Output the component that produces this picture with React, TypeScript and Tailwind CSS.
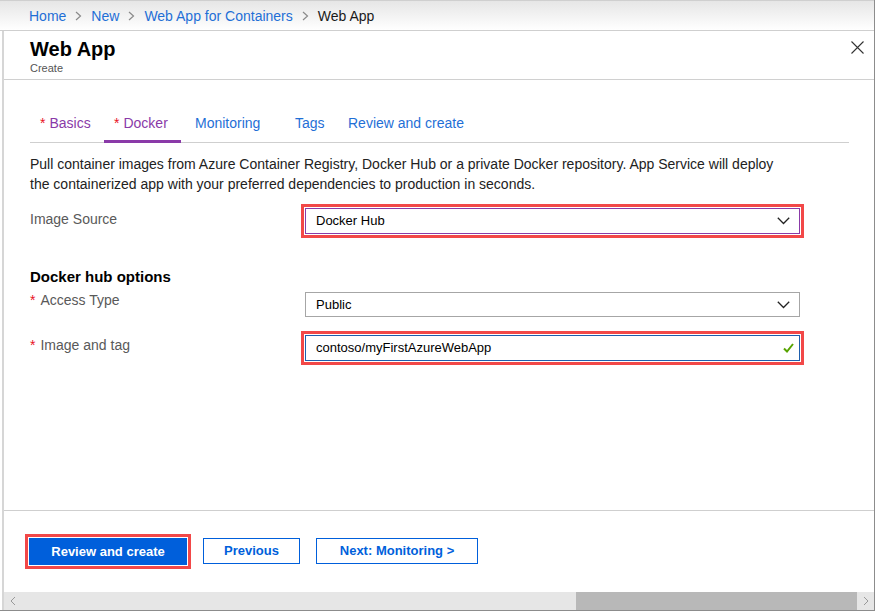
import React from 'react';

const FONT = "font-['Segoe_UI','Liberation_Sans',Arial,sans-serif]";
const INPUT_FONT = "font-['Liberation_Sans',Arial,sans-serif]";

function Chevron() {
    return (
        <svg width="13" height="8" viewBox="0 0 13 8" className="shrink-0">
            <path d="M0.8 0.8 L6.5 6.5 L12.2 0.8" fill="none" stroke="#222" strokeWidth="1.3" />
        </svg>
    );
}

function Crumb({ label, last }: { label: string; last?: boolean }) {
    return (
        <span className="flex items-center">
            <span className={last ? 'text-[#1a1a1a]' : 'text-[#1f6fd6]'}>{label}</span>
            {!last && (
                <svg width="7" height="10" viewBox="0 0 7 10" className="mx-[9px]">
                    <path d="M1 1 L5.5 5 L1 9" fill="none" stroke="#8a8a8a" strokeWidth="1.2" />
                </svg>
            )}
        </span>
    );
}

function Required() {
    return <span className="text-[#e81123] mr-[5px]">*</span>;
}

export default function App() {
    const tabs = [
        { label: 'Basics', req: true, visited: true, w: 'w-[70px]' },
        { label: 'Docker', req: true, visited: true, active: true, w: 'w-[77px]' },
        { label: 'Monitoring', w: 'w-[96px]' },
        { label: 'Tags', w: 'w-[49px]' },
        { label: 'Review and create', w: 'w-[142px]' },
    ];

    return (
        <div className={`w-[876px] h-[612px] bg-white overflow-hidden ${FONT}`}>
            <div className="w-[875px] h-[611px] flex flex-col border-r border-b border-[#8c8c8c]">

                {/* breadcrumb */}
                <div className="h-[31px] shrink-0 flex items-center pl-[29px] pt-[1px] text-[14px] border-t border-b border-[#cfcfcf] bg-gradient-to-b from-[#e6e6e6] to-white">
                    <Crumb label="Home" />
                    <Crumb label="New" />
                    <Crumb label="Web App for Containers" />
                    <Crumb label="Web App" last />
                </div>

                <div className="flex-1 flex flex-col ml-[2px] border-l-2 border-[#d6d6d6] min-h-0">

                    {/* header */}
                    <div className="h-[49px] shrink-0 flex justify-between border-b border-[#d0d0d0] pl-[26px] pr-[10px]">
                        <div className="pt-[5px]">
                            <div className="text-[20px] leading-[26px] font-semibold text-black">Web App</div>
                            <div className="text-[11px] leading-[14px] text-[#555] -mt-[1px]">Create</div>
                        </div>
                        <svg width="13" height="13" viewBox="0 0 13 13" className="mt-[10px]">
                            <path d="M0.5 0.5 L12.5 12.5 M12.5 0.5 L0.5 12.5" stroke="#333" strokeWidth="1.1" />
                        </svg>
                    </div>

                    {/* body */}
                    <div className="flex-1 pl-[26px] pr-[25px] pt-[33px]">
                        <div className="flex gap-[4px] border-b border-[#cfcfcf] text-[14px]">
                            {tabs.map((t) => (
                                <div
                                    key={t.label}
                                    className={`${t.w} px-[10px] pb-[7px] leading-[20px] whitespace-nowrap -mb-px border-b-[3px] ${t.active ? 'border-[#8a3aa8]' : 'border-transparent'} ${t.visited ? 'text-[#8a3aa8]' : 'text-[#1f6fd6]'}`}
                                >
                                    {t.req && <span className="text-[#e81123] mr-[4px]">*</span>}
                                    {t.label}
                                </div>
                            ))}
                        </div>

                        <p className="mt-[11px] text-[14px] leading-[20px] text-[#222]">
                            Pull container images from Azure Container Registry, Docker Hub or a private Docker repository. App Service will deploy
                            <br />
                            the containerized app with your preferred dependencies to production in seconds.
                        </p>

                        <div className="mt-[14px] grid grid-cols-[275px_495px] items-center text-[14px]">
                            <div className="text-[#595959] self-start leading-[20px] pt-[1px]">Image Source</div>
                            <div className={`h-[26px] border border-[#8a3aa8] flex items-center justify-between pl-[10px] pr-[9px] outline-[3px] outline-solid outline-[#f24848] outline-offset-[1px] ${INPUT_FONT} text-[13px] text-black`}>
                                Docker Hub
                                <Chevron />
                            </div>
                        </div>

                        <div className="mt-[33px] text-[15px] leading-[20px] font-semibold text-black">Docker hub options</div>

                        <div className="mt-[5px] grid grid-cols-[275px_495px] gap-y-[18px] text-[14px]">
                            <div className="text-[#595959] leading-[20px] -mt-[2px]"><Required />Access Type</div>
                            <div className={`h-[25px] border border-[#a6a6a6] flex items-center justify-between pl-[10px] pr-[9px] ${INPUT_FONT} text-[13px] text-black`}>
                                Public
                                <Chevron />
                            </div>

                            <div className="text-[#595959] leading-[20px]"><Required />Image and tag</div>
                            <div className={`h-[26px] border border-[#1e5fad] flex items-center justify-between pl-[10px] pr-[5px] outline-[3px] outline-solid outline-[#f24848] outline-offset-[1px] ${INPUT_FONT} text-[13px] text-black`}>
                                contoso/myFirstAzureWebApp
                                <svg width="11" height="10" viewBox="0 0 11 10">
                                    <path d="M1 5.5 L4 8.5 L10 1" fill="none" stroke="#57a300" strokeWidth="2" />
                                </svg>
                            </div>
                        </div>
                    </div>

                    {/* footer */}
                    <div className="h-[82px] shrink-0 border-t border-[#cfcfcf] flex items-start gap-[16px] pl-[25px] pt-[27px] text-[13px] font-bold">
                        <div className="w-[158px] h-[27px] bg-[#005fdb] text-white flex items-center justify-center outline-[3px] outline-solid outline-[#f24848] outline-offset-[1px]">
                            Review and create
                        </div>
                        <div className="w-[97px] h-[26px] border border-[#005fdb] text-[#005fdb] flex items-center justify-center">
                            Previous
                        </div>
                        <div className="w-[162px] h-[26px] border border-[#005fdb] text-[#005fdb] flex items-center justify-center">
                            Next: Monitoring &gt;
                        </div>
                    </div>

                    {/* horizontal scrollbar */}
                    <div className="h-[18px] shrink-0 flex bg-[#e6e6e6]">
                        <div className="w-[17px] flex items-center justify-center">
                            <svg width="6" height="10" viewBox="0 0 6 10"><path d="M5 1 L1 5 L5 9" fill="none" stroke="#999" strokeWidth="1" /></svg>
                        </div>
                        <div className="flex-1 flex">
                            <div className="w-[555px]" />
                            <div className="flex-1 bg-[#b8b8b8]" />
                        </div>
                        <div className="w-[17px] flex items-center justify-center">
                            <svg width="6" height="10" viewBox="0 0 6 10"><path d="M1 1 L5 5 L1 9" fill="none" stroke="#999" strokeWidth="1" /></svg>
                        </div>
                    </div>
                </div>
            </div>
        </div>
    );
}
